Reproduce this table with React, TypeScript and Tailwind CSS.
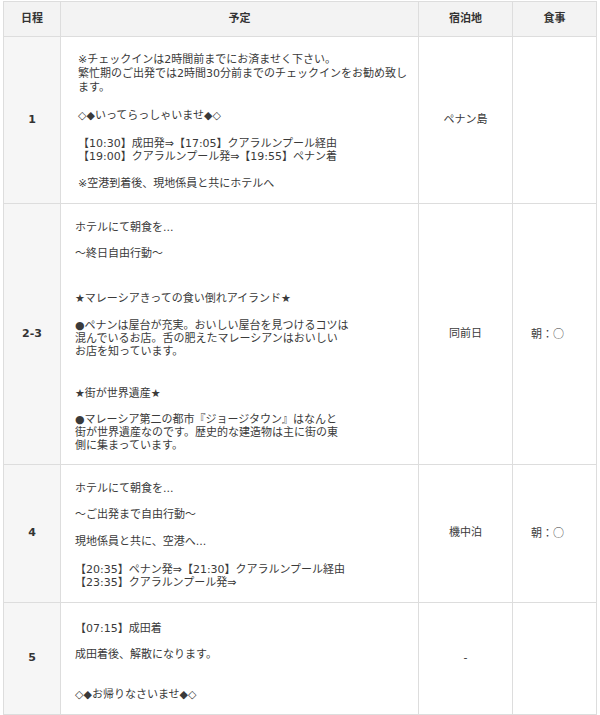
const jp = { fontFamily: '"DejaVu Sans", "Noto Sans CJK JP", sans-serif' }

function Line({ children, className = '' }: { children: React.ReactNode; className?: string }) {
  return <div className={`whitespace-nowrap ${className}`}>{children}</div>
}

// full-width circle as in the source font
function Maru() {
  return <span className="font-['Noto_Sans_CJK_JP']">○</span>
}

export default function App() {
  const th = 'border border-[#dddddd] bg-[#f3f3f3] py-[10px] text-center text-[11px] font-bold leading-[14px] text-[#333]'
  const dayCell = 'border border-[#dddddd] bg-[#f6f6f6] text-center align-middle text-[11px] font-bold text-[#333]'
  const stayCell = 'border border-[#dddddd] text-center align-middle text-[11px] text-[#3a3a3a]'
  const mealCell = 'border border-[#dddddd] pl-[18px] text-left align-middle text-[11px] text-[#3a3a3a]'
  const planCell = 'border border-[#dddddd] align-top text-[11px] leading-[13px] text-[#3a3a3a]'

  return (
    <div className="min-h-[715px] bg-white" style={jp}>
      <table className="ml-[3px] mt-px w-[593px] table-fixed border-collapse">
        <colgroup>
          <col className="w-[57px]" />
          <col className="w-[358px]" />
          <col className="w-[94px]" />
          <col className="w-[84px]" />
        </colgroup>
        <thead>
          <tr>
            <th className={th}>日程</th>
            <th className={th}>予定</th>
            <th className={th}>宿泊地</th>
            <th className={th}>食事</th>
          </tr>
        </thead>
        <tbody>
          <tr>
            <td className={dayCell}>1</td>
            <td className={`${planCell} pl-[17px] pt-[16px] pb-[12px]`}>
              <div className="leading-[14px]">
                <Line>※チェックインは2時間前までにお済ませく下さい。</Line>
                <Line>繁忙期のご出発では2時間30分前までのチェックインをお勧め致し</Line>
                <Line>ます。</Line>
                <Line className="mt-[14px]">◇◆いってらっしゃいませ◆◇</Line>
              </div>
              <div className="mt-[14px] leading-[13px]">
                <Line>【10:30】成田発⇒【17:05】クアラルンプール経由</Line>
                <Line>【19:00】クアラルンプール発⇒【19:55】ペナン着</Line>
              </div>
              <Line className="mt-[14px] leading-[14px]">※空港到着後、現地係員と共にホテルへ</Line>
            </td>
            <td className={stayCell}>ペナン島</td>
            <td className={mealCell}></td>
          </tr>
          <tr>
            <td className={dayCell}>2-3</td>
            <td className={`${planCell} pl-[14px] pt-[17px] pb-[12.5px]`}>
              <Line>ホテルにて朝食を...</Line>
              <Line className="mt-[13px]">〜終日自由行動〜</Line>
              <Line className="mt-[32px]">★マレーシアきっての食い倒れアイランド★</Line>
              <div className="mt-[14px]">
                <Line>●ペナンは屋台が充実。おいしい屋台を見つけるコツは</Line>
                <Line>混んでいるお店。舌の肥えたマレーシアンはおいしい</Line>
                <Line>お店を知っています。</Line>
              </div>
              <Line className="mt-[28.5px]">★街が世界遺産★</Line>
              <div className="mt-[13px]">
                <Line>●マレーシア第二の都市『ジョージタウン』はなんと</Line>
                <Line>街が世界遺産なのです。歴史的な建造物は主に街の東</Line>
                <Line>側に集まっています。</Line>
              </div>
            </td>
            <td className={stayCell}>同前日</td>
            <td className={mealCell}>朝：<Maru /></td>
          </tr>
          <tr>
            <td className={dayCell}>4</td>
            <td className={`${planCell} pl-[14px] pt-[16.5px] pb-[13.5px]`}>
              <Line>ホテルにて朝食を...</Line>
              <Line className="mt-[13px]">〜ご出発まで自由行動〜</Line>
              <Line className="mt-[14px]">現地係員と共に、空港へ...</Line>
              <div className="mt-[15px]">
                <Line>【20:35】ペナン発⇒【21:30】クアラルンプール経由</Line>
                <Line>【23:35】クアラルンプール発⇒</Line>
              </div>
            </td>
            <td className={stayCell}>機中泊</td>
            <td className={mealCell}>朝：<Maru /></td>
          </tr>
          <tr>
            <td className={dayCell}>5</td>
            <td className={`${planCell} pl-[14px] pt-[18.5px] pb-[13.5px]`}>
              <Line>【07:15】成田着</Line>
              <Line className="mt-[13px]">成田着後、解散になります。</Line>
              <Line className="mt-[27px]">◇◆お帰りなさいませ◆◇</Line>
            </td>
            <td className={stayCell}>-</td>
            <td className={mealCell}></td>
          </tr>
        </tbody>
      </table>
    </div>
  )
}
